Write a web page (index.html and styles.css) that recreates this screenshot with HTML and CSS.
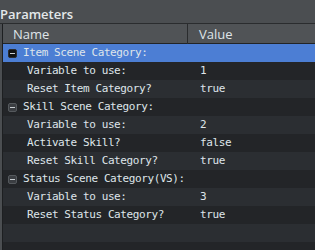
FILE: index.html
```html
<!DOCTYPE html>
<html lang="en">
<head>
    <meta charset="UTF-8">
    <title>Parameters</title>
    <link rel="stylesheet" href="styles.css">
</head>
<body>
    <div class="panel-title">Parameters</div>

    <div class="grid">
        <div class="grid-head">
            <div class="col-name">Name</div>
            <div class="col-value">Value</div>
        </div>

        <div class="row group selected">
            <div class="cell-name"><span class="toggle"></span>Item Scene Category:</div>
            <div class="cell-value"></div>
        </div>
        <div class="row">
            <div class="cell-name child">Variable to use:</div>
            <div class="cell-value">1</div>
        </div>
        <div class="row">
            <div class="cell-name child">Reset Item Category?</div>
            <div class="cell-value">true</div>
        </div>

        <div class="row group">
            <div class="cell-name"><span class="toggle"></span>Skill Scene Category:</div>
            <div class="cell-value"></div>
        </div>
        <div class="row">
            <div class="cell-name child">Variable to use:</div>
            <div class="cell-value">2</div>
        </div>
        <div class="row">
            <div class="cell-name child">Activate Skill?</div>
            <div class="cell-value">false</div>
        </div>
        <div class="row">
            <div class="cell-name child">Reset Skill Category?</div>
            <div class="cell-value">true</div>
        </div>

        <div class="row group">
            <div class="cell-name"><span class="toggle"></span>Status Scene Category(VS):</div>
            <div class="cell-value"></div>
        </div>
        <div class="row">
            <div class="cell-name child">Variable to use:</div>
            <div class="cell-value">3</div>
        </div>
        <div class="row">
            <div class="cell-name child">Reset Status Category?</div>
            <div class="cell-value">true</div>
        </div>

        <!-- empty rows -->
        <div class="row"><div class="cell-name"></div><div class="cell-value"></div></div>
        <div class="row"><div class="cell-name"></div><div class="cell-value"></div></div>
    </div>
</body>
</html>
```

FILE: styles.css
```css
body {
    margin: 0;
    width: 315px;
    height: 250px;
    overflow: hidden;
    background: #4b4e51;
    font-family: 'DejaVu Sans Mono', monospace;
    color: #dfe5ea;
}

.panel-title {
    height: 23px;
    line-height: 28px;
    font-family: 'Open Sans', sans-serif;
    font-weight: 600;
    font-size: 13px;
    color: #e4e8ea;
    border-bottom: 1px solid #2a2c2e;
}

.grid {
    margin-left: 2px;
    border-left: 1px solid #1d1f21;
    background: #25272a;
}

.grid-head {
    display: grid;
    grid-template-columns: 185px 1fr;
    height: 19px;
    background: #505356;
    border-bottom: 1px solid #222426;
    font-family: 'Open Sans', sans-serif;
    font-size: 13px;
    line-height: 20px;
    color: #dfe4e8;
}

.col-name {
    padding-left: 10px;
    border-right: 1px solid #2a2c2e;
}

.col-value {
    padding-left: 11px;
}

.row {
    display: grid;
    grid-template-columns: 194px 1fr;
    height: 18px;
    font-size: 11px;
    letter-spacing: -0.4px;
    line-height: 18px;
    background: #2b2e32;
    white-space: nowrap;
}

.row:nth-of-type(odd) {
    background: #232528;
}

.row.selected {
    background: #4c7ed4;
}

.cell-name {
    display: flex;
    align-items: center;
    padding-left: 5px;
}

.cell-name.child {
    padding-left: 24px;
}

.cell-value {
    padding-left: 3px;
}

.toggle {
    flex: none;
    width: 7px;
    height: 7px;
    margin-right: 6px;
    border-radius: 2px;
    background: #3b3e42;
    border: 1px solid #55595d;
    position: relative;
}

.toggle::after {
    content: '';
    position: absolute;
    left: 1px;
    right: 1px;
    top: 3px;
    height: 1px;
    background: #c9ced2;
}

.selected .toggle {
    background: #111214;
    border-color: #2a2c30;
}
```
